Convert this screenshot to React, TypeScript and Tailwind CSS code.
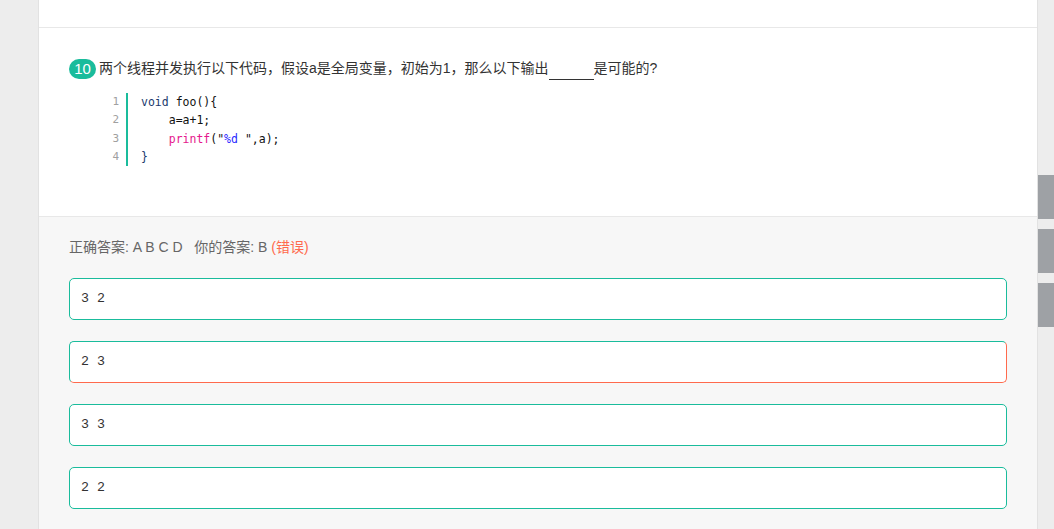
import React from 'react';

const options = [
  { text: '3 2', wrong: false },
  { text: '2 3', wrong: true },
  { text: '3 3', wrong: false },
  { text: '2 2', wrong: false },
];

const codeLines: React.ReactNode[] = [
  <>
    <span className="text-[#1c3a6e]">void</span> foo(){'{'}
  </>,
  <>{'    '}a=a+1;</>,
  <>
    {'    '}
    <span className="text-[#e5188d]">printf</span>("<span className="text-[#2a2aff]">%d </span>",a);
  </>,
  <span className="text-[#1c3a6e]">{'}'}</span>,
];

export default function App() {
  return (
    <div className="flex h-[529px] w-[1054px] overflow-hidden bg-[#ededed] font-['Liberation_Sans','Noto_Sans_CJK_SC',sans-serif]">
      <div className="w-[38px] shrink-0" />
      <div className="w-[1000px] shrink-0 border-x border-[#e2e2e2] bg-[#f7f7f7]">
        {/* 上一题底部 */}
        <div className="h-[28px] border-b border-[#e8e8e8] bg-white" />

        {/* 题目 */}
        <div className="h-[189px] border-b border-[#e8e8e8] bg-white px-[30px] pt-[31px]">
          <div className="flex h-[20px] items-center">
            <span className="flex h-[20px] w-[27px] items-center justify-center rounded-full bg-[#1abc9c] text-[15px] text-white">
              10
            </span>
            <span className="ml-[3px] text-[14px] text-[#333]">
              两个线程并发执行以下代码，假设a是全局变量，初始为1，那么以下输出
              <span className="inline-block w-[45px] border-b border-[#333] align-baseline">&nbsp;</span>
              是可能的?
            </span>
          </div>

          <div className="mt-[14px] flex">
            <div className="w-[50px] shrink-0 text-right font-['DejaVu_Sans_Mono',monospace] text-[11px] leading-[18.3px] text-[#a0a0a0]">
              {codeLines.map((_, i) => (
                <div key={i}>{i + 1}</div>
              ))}
            </div>
            <div className="ml-[7px] w-[2px] bg-[#1abc9c]" />
            <pre className="pl-[13px] font-['DejaVu_Sans_Mono',monospace] text-[11.5px] leading-[18.3px] text-[#111]">
              {codeLines.map((line, i) => (
                <div key={i}>{line}</div>
              ))}
            </pre>
          </div>
        </div>

        {/* 答案 */}
        <div className="px-[30px] pt-[20px]">
          <div className="h-[20px] text-[14px] leading-[20px] text-[#666]">
            正确答案: A B C D&nbsp;&nbsp; 你的答案: B <span className="text-[#ff6a4d]">(错误)</span>
          </div>
          <div className="mt-[21px] flex w-[938px] flex-col gap-[21px]">
            {options.map((o, i) => (
              <div
                key={i}
                className={`flex h-[42px] items-center rounded-[5px] border bg-white px-[11px] font-['Liberation_Mono',monospace] text-[13.3px] text-[#333] ${
                  o.wrong
                    ? 'border-t-[#1abc9c] border-l-[#1abc9c] border-r-[#ff6a4d] border-b-[#ff6a4d]'
                    : 'border-[#1abc9c]'
                }`}
              >
                {o.text}
              </div>
            ))}
          </div>
        </div>
      </div>

      {/* 右侧浮动按钮 */}
      <div className="flex flex-1 flex-col gap-[10px] pt-[175px]">
        <div className="h-[44px] bg-[#9ea1a5]" />
        <div className="h-[44px] bg-[#9ea1a5]" />
        <div className="h-[44px] bg-[#9ea1a5]" />
      </div>
    </div>
  );
}
